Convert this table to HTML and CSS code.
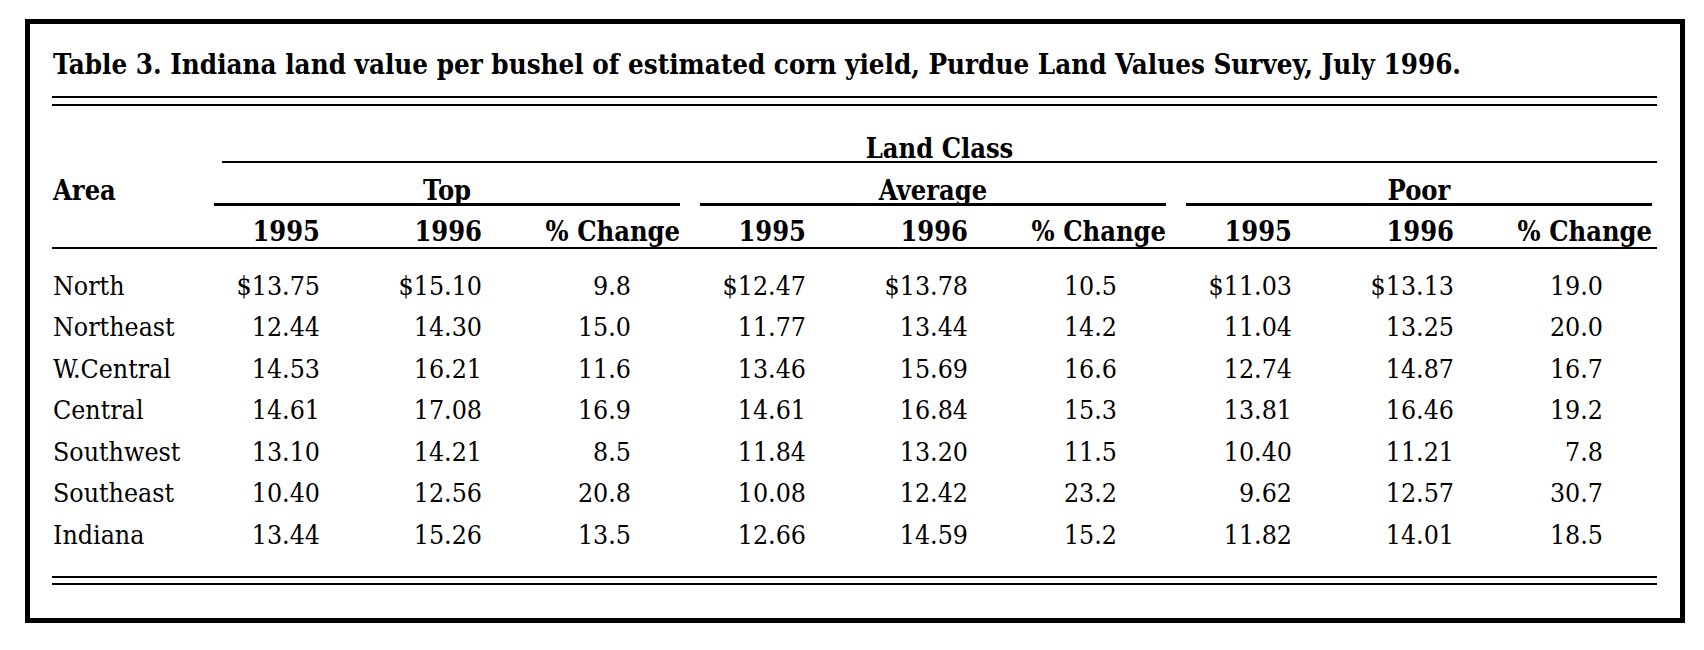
FILE: index.html
```html
<!DOCTYPE html>
<html lang="en">
<head>
<meta charset="utf-8">
<title>Table 3</title>
<link rel="stylesheet" href="styles.css">
</head>
<body>
<div class="frame">
  <h1 class="title">Table 3. Indiana land value per bushel of estimated corn yield, Purdue Land Values Survey, July 1996.</h1>
  <div class="double-rule top-rule"></div>

  <div class="table">
    <div class="row row-lc">
      <div class="lc">Land Class</div>
    </div>
    <div class="row row-groups">
      <div class="area">Area</div>
      <div class="group"><div class="group-label">Top</div></div>
      <div class="group"><div class="group-label">Average</div></div>
      <div class="group"><div class="group-label">Poor</div></div>
    </div>
    <div class="row row-sub">
      <div class="sub"></div>
      <div class="sub num">1995</div><div class="sub num">1996</div><div class="sub num">% Change</div>
      <div class="sub num">1995</div><div class="sub num">1996</div><div class="sub num">% Change</div>
      <div class="sub num">1995</div><div class="sub num">1996</div><div class="sub num">% Change</div>
    </div>

    <div class="body">
      <div class="row data"><div class="name">North</div><div class="num">$13.75</div><div class="num">$15.10</div><div class="num pct">9.8</div><div class="num">$12.47</div><div class="num">$13.78</div><div class="num pct">10.5</div><div class="num">$11.03</div><div class="num">$13.13</div><div class="num pct">19.0</div></div>
      <div class="row data"><div class="name">Northeast</div><div class="num">12.44</div><div class="num">14.30</div><div class="num pct">15.0</div><div class="num">11.77</div><div class="num">13.44</div><div class="num pct">14.2</div><div class="num">11.04</div><div class="num">13.25</div><div class="num pct">20.0</div></div>
      <div class="row data"><div class="name">W.Central</div><div class="num">14.53</div><div class="num">16.21</div><div class="num pct">11.6</div><div class="num">13.46</div><div class="num">15.69</div><div class="num pct">16.6</div><div class="num">12.74</div><div class="num">14.87</div><div class="num pct">16.7</div></div>
      <div class="row data"><div class="name">Central</div><div class="num">14.61</div><div class="num">17.08</div><div class="num pct">16.9</div><div class="num">14.61</div><div class="num">16.84</div><div class="num pct">15.3</div><div class="num">13.81</div><div class="num">16.46</div><div class="num pct">19.2</div></div>
      <div class="row data"><div class="name">Southwest</div><div class="num">13.10</div><div class="num">14.21</div><div class="num pct">8.5</div><div class="num">11.84</div><div class="num">13.20</div><div class="num pct">11.5</div><div class="num">10.40</div><div class="num">11.21</div><div class="num pct">7.8</div></div>
      <div class="row data"><div class="name">Southeast</div><div class="num">10.40</div><div class="num">12.56</div><div class="num pct">20.8</div><div class="num">10.08</div><div class="num">12.42</div><div class="num pct">23.2</div><div class="num">9.62</div><div class="num">12.57</div><div class="num pct">30.7</div></div>
      <div class="row data"><div class="name">Indiana</div><div class="num">13.44</div><div class="num">15.26</div><div class="num pct">13.5</div><div class="num">12.66</div><div class="num">14.59</div><div class="num pct">15.2</div><div class="num">11.82</div><div class="num">14.01</div><div class="num pct">18.5</div></div>
    </div>
  </div>

  <div class="double-rule bottom-rule"></div>
</div>
</body>
</html>
```

FILE: styles.css
```css
html, body {
  margin: 0;
  padding: 0;
  background: #ffffff;
}

body {
  padding: 19px 0 0 25px;
  font-family: "DejaVu Serif Condensed", "DejaVu Serif", serif;
  font-stretch: condensed;
  color: #000000;
}

.frame {
  box-sizing: border-box;
  width: 1660px;
  border: 5px solid #000000;
  padding: 25px 23px 33px 22px;
}

.title {
  margin: 0;
  font-size: 27.5px;
  line-height: 30px;
  font-weight: bold;
  white-space: nowrap;
  padding-left: 1px;
}

.double-rule {
  border-top: 2px solid #000000;
  border-bottom: 2px solid #000000;
}

.top-rule {
  margin-top: 17px;
  height: 6px;
}

.bottom-rule {
  margin-top: 21px;
  height: 5px;
}

.table {
  margin-top: 31px;
  font-size: 26.5px;
}

.row {
  display: grid;
  grid-template-columns: 147px 126px 162px 198px 126px 162px 198px 126px 162px 198px;
}

.row-lc .lc {
  grid-column: 2 / -1;
  margin-left: 23px;
  text-align: center;
  font-size: 27px;
  font-weight: bold;
  line-height: 24px;
  border-bottom: 2px solid #000000;
}

.row-groups {
  margin-top: 16px;
  font-size: 27px;
  font-weight: bold;
  line-height: 24px;
}

.area {
  padding-left: 1px;
}

.group {
  grid-column: span 3;
}

.group-label {
  margin: 0 5px 0 15px;
  text-align: center;
  border-bottom: 3px solid #000000;
}

.row-sub {
  margin-top: 14px;
  font-size: 27px;
}

.sub {
  font-weight: bold;
  line-height: 24px;
  padding-bottom: 3px;
  border-bottom: 2px solid #000000;
}

.num {
  text-align: right;
  padding-right: 5px;
  white-space: nowrap;
}

.body {
  margin-top: 15.5px;
}

.data {
  height: 41.5px;
  line-height: 41.5px;
}

.name {
  padding-left: 1px;
}

.num.pct {
  padding-right: 54px;
}
```
